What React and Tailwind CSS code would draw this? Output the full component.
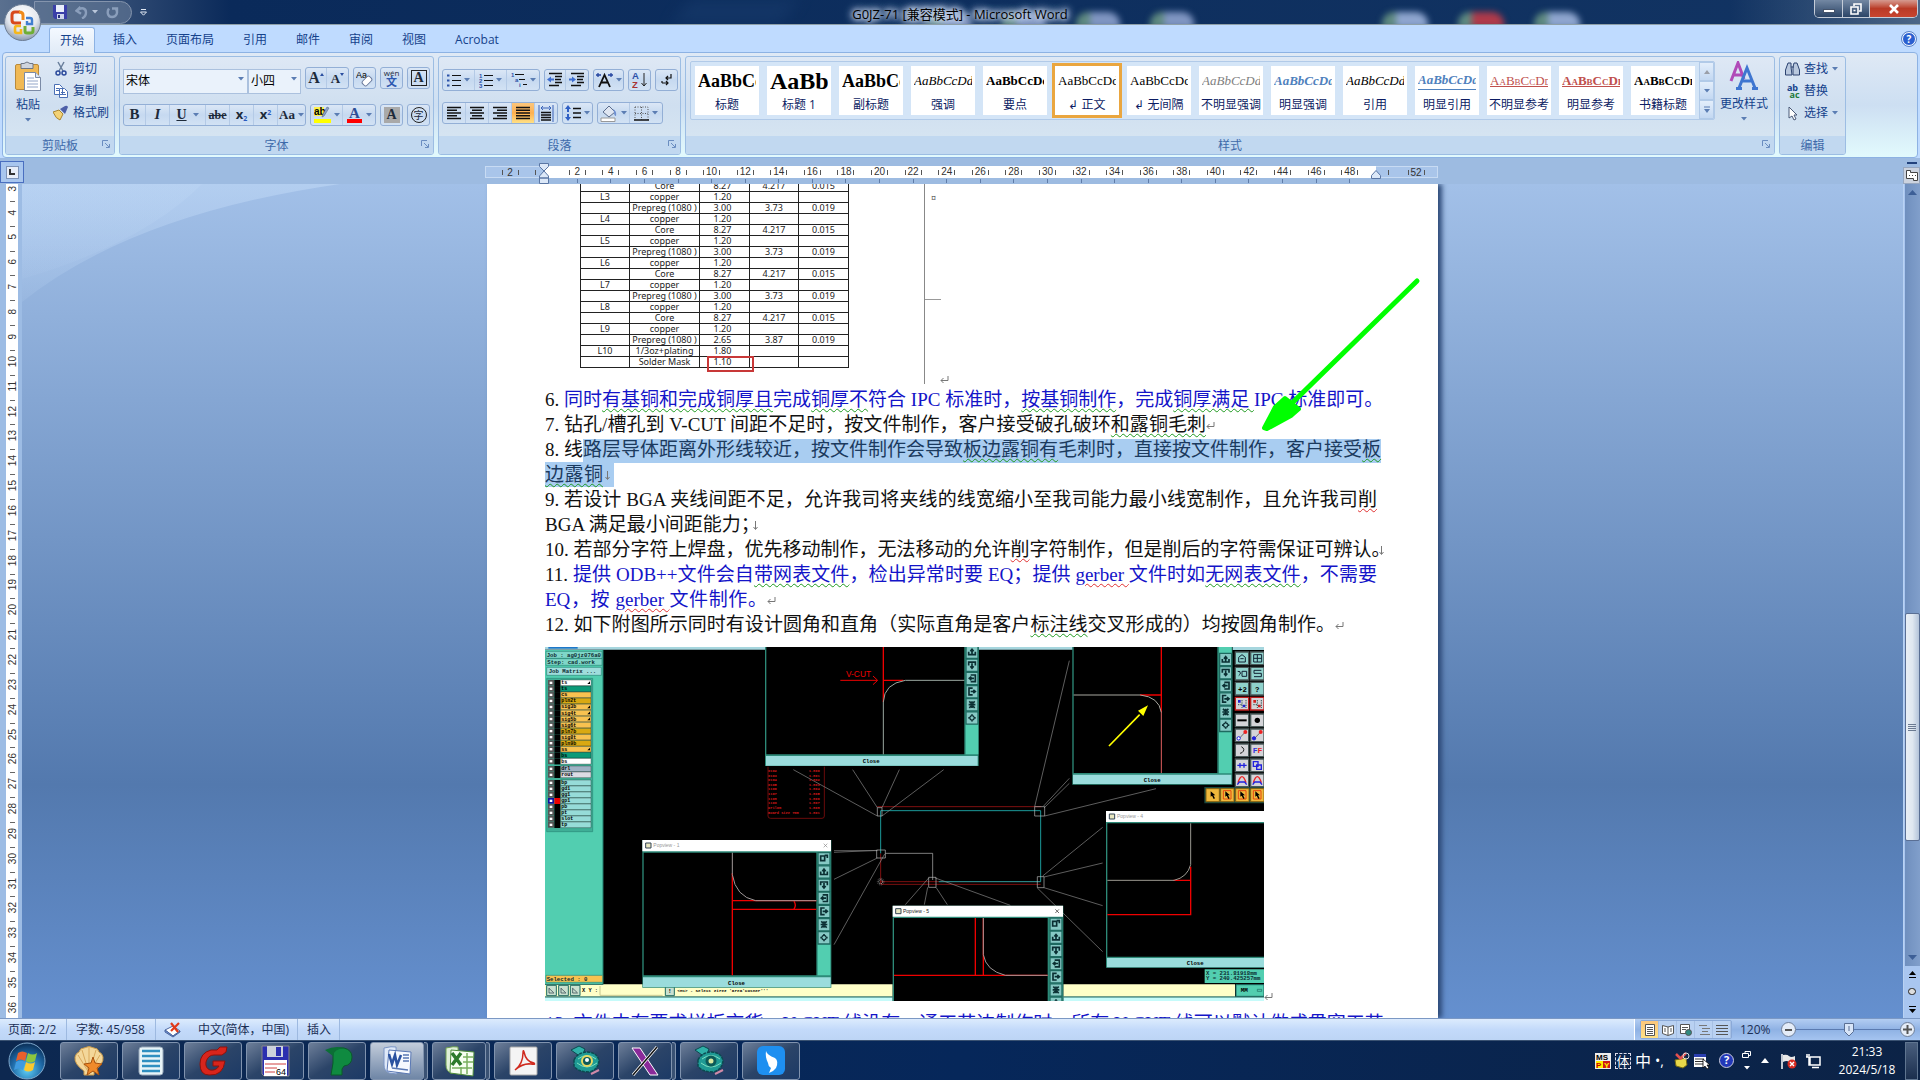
import React from "react";

const UI = "font-['Open_Sans','Noto_Sans_CJK_SC',sans-serif]";

function Caret({ c = "#5b7db3" }) {
  return (
    <svg width="6" height="4" viewBox="0 0 6 4" className="shrink-0">
      <path d="M0 0h6L3 3.6z" fill={c} />
    </svg>
  );
}

function Bars({ rows, c = "#111" }) {
  return (
    <svg width="16" height="16" viewBox="0 0 16 16">
      {rows.map(([a, b], i) => (
        <path key={i} d={`M${a} ${2.5 + i * 2.75}H${b}`} stroke={c} strokeWidth="1.5" />
      ))}
    </svg>
  );
}

function Cluster({ children }) {
  return (
    <div className="flex h-[22px] shrink-0 overflow-hidden rounded-[3px] border border-[#93afd6] bg-linear-to-b from-[#dbe7f6] via-[#c6d9f0] to-[#d2e2f4]">
      {children}
    </div>
  );
}

function Tool({ w, label, children, active, caret, last }) {
  return (
    <button
      aria-label={label}
      title={label}
      className={`${w} flex h-full items-center justify-center gap-[3px] text-[#1d2a3a] ${last ? "" : "border-r border-[#b4cae6]"} ${active ? "bg-linear-to-b from-[#fbc67b] via-[#fdb04f] to-[#ffe084]" : ""}`}
    >
      {children}
      {caret && <Caret />}
    </button>
  );
}

function Launcher() {
  return (
    <button aria-label="对话框启动器" className="absolute top-1 right-1">
      <svg width="8" height="8" viewBox="0 0 8 8" fill="none" stroke="#6a8dc0">
        <path d="M.5 6V.5H6M3 3l4 4M7.5 4v3.5H4" />
      </svg>
    </button>
  );
}

function Group({ title, w, children, launcher = true }) {
  return (
    <section className={`${w} flex h-[99px] flex-col overflow-hidden rounded-[3px] border border-[#9cbde3] bg-linear-to-b from-[#dee8f5] via-[#cfdff0] to-[#d9e7f2]`}>
      <div className="flex h-[79px] min-w-0">{children}</div>
      <div className="relative flex flex-1 items-center justify-center bg-[#c1d8f0] pt-[2px] text-xs text-[#3e6aaa]">
        {title}
        {launcher && <Launcher />}
      </div>
    </section>
  );
}

const STYLES = [
  ["标题", "text-[18px] font-bold"],
  ["标题 1", "text-[24px] font-bold"],
  ["副标题", "text-[18px] font-bold"],
  ["强调", "text-[13px] italic"],
  ["要点", "text-[13px] font-bold"],
  ["↲ 正文", "text-[13px]", true],
  ["↲ 无间隔", "text-[13px]"],
  ["不明显强调", "text-[13px] italic text-[#808080]"],
  ["明显强调", "text-[13px] italic font-bold text-[#4f81bd]"],
  ["引用", "text-[13px] italic"],
  ["明显引用", "text-[13px] italic font-bold text-[#4f81bd] border-b border-[#4f81bd]"],
  ["不明显参考", "text-[13px] text-[#c0504d] underline [font-variant:small-caps]"],
  ["明显参考", "text-[13px] font-bold text-[#c0504d] underline [font-variant:small-caps]"],
  ["书籍标题", "text-[13px] font-bold [font-variant:small-caps]"],
];

function TitleBar() {
  return (
    <header className="relative flex h-[25px] shrink-0 items-center overflow-hidden border-b border-[#8fa0a8] bg-linear-to-r from-[#5a708f] via-[#0a2a5a] via-12% to-[#123463]">
      <div className="absolute inset-y-0 left-[680px] w-[110px] -skew-x-[30deg] bg-[#16396a] opacity-70 blur-sm" />
      <div className="absolute inset-y-0 right-0 w-[190px] bg-linear-to-r from-transparent to-[#4b6687]" />
      <div className="absolute top-3 right-[340px] flex gap-[30px] blur-[3px]">
        {["bg-[#8fa6cf]", "bg-[#b03a4a]", "bg-[#8fa6cf]"].map((c, i) => (
          <div key={i} className={`${c} h-4 w-[46px] rounded-t-xl border-l-[14px] border-[#5f8a80]`} />
        ))}
      </div>
      <div className="absolute top-3 left-[928px] flex gap-[30px] blur-[3px]">
        {[0, 1, 2, 3].map((i) => (
          <div key={i} className="h-4 w-[44px] rounded-t-xl border-l-[14px] border-[#5f8a80] bg-[#8096c2]" />
        ))}
      </div>
      <div className="relative ml-[34px] flex h-[23px] w-[98px] items-center gap-[8px] rounded-r-full border border-[#8494ad] bg-[#5f7593]/70 pl-[18px]">
        <button aria-label="保存">
          <svg width="14" height="14" viewBox="0 0 14 14">
            <path d="M0 0h14v14H2L0 12z" fill="#3a3fa8" />
            <path d="M3 0h8v7H3z" fill="#e9eefb" />
            <path d="M4 9h7v5H4z" fill="#cfd6ee" />
            <path d="M5 10h2v3H5z" fill="#26307c" />
          </svg>
        </button>
        <button aria-label="撤消" className="flex items-center gap-1">
          <svg width="13" height="13" viewBox="0 0 13 13" fill="none" stroke="#8a9ebb" strokeWidth="2.4">
            <path d="M2 4.5c5-4 9-2 9 2 0 3-2 5-4 6M5.500 1L1.500 4.700l4.500 3" />
          </svg>
          <Caret c="#b9c6da" />
        </button>
        <button aria-label="重复">
          <svg width="13" height="13" viewBox="0 0 13 13" fill="none" stroke="#8a9ebb" strokeWidth="2.4">
            <path d="M3 2.500C1 5 1 11 6 11s6-5 4-8M6 2.500h5V7" />
          </svg>
        </button>
      </div>
      <button aria-label="自定义快速访问工具栏" className="relative ml-2 text-white">
        <svg width="7" height="7" viewBox="0 0 7 7"><path d="M1 .5h5" stroke="#dfe7f2" /><path d="M.5 3h6L3.500 6.200z" fill="none" stroke="#dfe7f2" /></svg>
      </button>
      <h1 className="absolute inset-x-0 top-[5px] text-center text-[13px] leading-[18px] text-black [text-shadow:0_0_4px_#cfdcf2,0_0_6px_#cfdcf2,0_0_8px_#cfdcf2,0_0_10px_#b5c6e2,0_0_12px_#b5c6e2]">
        G0JZ-71 [兼容模式] - Microsoft Word
      </h1>
      <div className="absolute top-0 right-[2px] flex h-[18px] w-[104px] overflow-hidden rounded-b-[5px] border border-t-0 border-[#c4ccd8]">
        <button aria-label="最小化" className="flex w-[28px] items-center justify-center border-r border-[#c4ccd8] bg-linear-to-b from-[#7388a3] to-[#2c4567]">
          <span className="mt-1 h-[4px] w-[12px] border border-[#44536a] bg-white" />
        </button>
        <button aria-label="还原" className="flex w-[27px] items-center justify-center border-r border-[#c4ccd8] bg-linear-to-b from-[#7388a3] to-[#2c4567]">
          <svg width="12" height="12" viewBox="0 0 12 12" fill="none" stroke="#fff" strokeWidth="1.600"><path d="M4 3V1h7v7H9M1 4h7v7H1zM3.500 7.500h2" /></svg>
        </button>
        <button aria-label="关闭" className="flex flex-1 items-center justify-center bg-linear-to-b from-[#d59a90] via-[#b93a26] to-[#c8452f]">
          <svg width="12" height="10" viewBox="0 0 12 10"><path d="M2 1l8 8M10 1L2 9" stroke="#fff" strokeWidth="2.600" /></svg>
        </button>
      </div>
    </header>
  );
}

function Orb() {
  return (
    <button aria-label="Office 按钮" className="absolute top-[4px] left-[4px] z-10">
      <svg width="37" height="37" viewBox="0 0 37 37">
        <defs>
          <radialGradient id="orb" cx=".5" cy=".3" r=".7"><stop offset="0" stopColor="#fff" /><stop offset=".6" stopColor="#e3e7ee" /><stop offset="1" stopColor="#8d9bb0" /></radialGradient>
        </defs>
        <circle cx="18.500" cy="18.500" r="18" fill="url(#orb)" stroke="#6b7c94" />
        <g fill="none" strokeWidth="3">
          <path d="M16 8h-5q-3 0-3 3v5q0 3 3 3h6" stroke="#d8491c" />
          <path d="M15 8q4 0 4 3v5" stroke="#ef8a1b" />
          <path d="M22 14h4q2 0 2 2v4h-5v-3" stroke="#3f7ed0" strokeWidth="2.400" />
          <path d="M17 22h-4q-2 0-2 2v3q0 2 2 2h4v-4" stroke="#f5b71c" strokeWidth="2.600" />
          <path d="M21 22v5q0 2 2 2h3q3 0 3-2v-4" stroke="#6fae35" />
        </g>
      </svg>
    </button>
  );
}

function Ribbon() {
  const tabs = ["插入", "页面布局", "引用", "邮件", "审阅", "视图", "Acrobat"];
  return (
    <>
      <nav className="flex h-[27px] shrink-0 items-end bg-[#bfdbff] pr-1 pl-[49px] text-xs text-[#15428b]">
        <button className="relative top-px h-[26px] w-[46px] rounded-t-[3px] border border-b-0 border-[#8db2e3] bg-linear-to-b from-[#f4f9ff] to-[#e1ebf7]">开始</button>
        <div className="flex h-[25px] flex-1 items-center gap-[29px] pl-[18px]">
          {tabs.map((t) => <button key={t}>{t}</button>)}
        </div>
        <button aria-label="帮助" className="mb-[6px] flex size-[14px] items-center justify-center rounded-full border border-white bg-[#2a5fd0] text-[10px] leading-none font-bold text-white outline outline-[#5b83c8]">?</button>
      </nav>
      <div className="mx-[2px] flex h-[106px] shrink-0 gap-1 rounded-[4px] border border-[#8db2e3] bg-linear-to-b from-[#dfe9f5] via-[#cddff2] to-[#e2fafd] py-[3px] pr-[71px] pl-[2px]">
        <Group title="剪贴板" w="w-[110px] shrink-0">
          <button className="flex w-[44px] flex-col items-center pt-1 text-xs text-[#15428b]">
            <svg width="27" height="31" viewBox="0 0 27 31">
              <rect x=".5" y="3.500" width="23" height="25" rx="1.500" fill="#f0b955" stroke="#b98a3c" />
              <path d="M6 2.500h3q3-3 6 0h3v5H6z" fill="#cfd5de" stroke="#6d7787" />
              <path d="M9.500 11.500h11l5 5v13h-16z" fill="#fff" stroke="#7b8ba6" />
              <path d="M12 17h7M12 20h11M12 23h11M12 26h11" stroke="#93a6c8" />
              <path d="M20.500 11.500v5h5" fill="#dfe7f5" stroke="#7b8ba6" />
            </svg>
            <span className="mt-[3px] leading-5">粘贴</span>
            <span className="mt-[3px]"><Caret /></span>
          </button>
          <div className="flex flex-col items-start pt-px pl-[3px] text-xs text-[#15428b]">
            <button className="flex h-[22px] items-center gap-1">
              <svg width="16" height="16" viewBox="0 0 16 16" fill="none" strokeWidth="1.500"><path d="M5 1l5 9M11 1L6 10" stroke="#6a7f9c" /><circle cx="5" cy="12" r="2" stroke="#2b4a9c" /><circle cx="11" cy="12" r="2" stroke="#2b4a9c" /></svg>
              剪切
            </button>
            <button className="flex h-[22px] items-center gap-1">
              <svg width="16" height="16" viewBox="0 0 16 16" fill="#fff" stroke="#4a6fb5"><path d="M1.500 1.500h5l3 3v7h-8zM6.500 5.500h5l3 3v6h-8z" /><path d="M8 9.500h4M8 11.500h5M3 5.500h3M3 7.500h3" /></svg>
              复制
            </button>
            <button className="flex h-[22px] items-center gap-1">
              <svg width="16" height="16" viewBox="0 0 16 16"><path d="M0 7l6-2 4 4-3 6q-4-1-7-8z" fill="#f3d276" stroke="#a98530" /><path d="M7 4l5 5 3-7q-1-2-3-1z" fill="#4d5fa8" /></svg>
              格式刷
            </button>
          </div>
        </Group>

        <Group title="字体" w="w-[315px] shrink-0">
          <div className="flex flex-1 flex-col gap-[10px] pt-[10px] pl-[3px]">
            <div className="flex gap-1">
              <div className="flex">
                {[["w-[125px]", "宋体", "字体"], ["w-[53px]", "小四", "字号"]].map(([w, v, l]) => (
                  <div key={v} className={`${w} relative`}>
                    <select aria-label={l} className="h-[25px] w-full appearance-none border border-[#abc1de] bg-[#eaf2fb] pl-[2px] text-xs text-black" defaultValue={v}>
                      <option>{v}</option>
                    </select>
                    <span className="pointer-events-none absolute top-[10px] right-[4px] flex"><Caret /></span>
                  </div>
                ))}
              </div>
              <Cluster>
                <Tool w="w-[21px]" label="增大字体"><b className="font-['Liberation_Serif',serif] text-base leading-none">A</b><svg width="4" height="10" className="-ml-[3px]" viewBox="0 0 4 10"><path d="M0 3l2-3 2 3z" fill="#2a4ea0" /></svg></Tool>
                <Tool w="w-[21px]" label="缩小字体" last><b className="font-['Liberation_Serif',serif] text-[13px] leading-none">A</b><svg width="4" height="10" className="-ml-[3px]" viewBox="0 0 4 10"><path d="M0 0l2 3 2-3z" fill="#2a4ea0" /></svg></Tool>
              </Cluster>
              <Cluster>
                <Tool w="w-[21px]" label="清除格式" last><svg width="17" height="17" viewBox="0 0 17 17"><text x="0" y="8" fontSize="9" fontFamily="Liberation Sans">Aa</text><rect x="6" y="8" width="10" height="6" rx="2" transform="rotate(-45 11 11)" fill="#fff" stroke="#68789a" /></svg></Tool>
              </Cluster>
              <Cluster>
                <Tool w="w-[21px]" label="拼音指南" last><span className="flex flex-col items-center text-[8px] leading-[8px]">wén<span className="text-[11px] leading-[10px] font-bold text-[#2e58b0]">文</span></span></Tool>
              </Cluster>
              <Cluster>
                <Tool w="w-[21px]" label="字符边框" last><b className="flex size-4 items-center justify-center border border-[#222] font-['Liberation_Serif',serif] text-sm leading-none">A</b></Tool>
              </Cluster>
            </div>
            <div className="flex gap-1">
              <Cluster>
                <Tool w="w-[22px]" label="加粗"><b className="font-['Liberation_Serif',serif] text-[15px]">B</b></Tool>
                <Tool w="w-[24px]" label="倾斜"><b className="font-['Liberation_Serif',serif] text-[15px] italic">I</b></Tool>
                <Tool w="w-[36px]" label="下划线" caret><b className="mr-[3px] font-['Liberation_Serif',serif] text-[14px] underline">U</b></Tool>
                <Tool w="w-[24px]" label="删除线"><b className="font-['Liberation_Serif',serif] text-xs line-through">abe</b></Tool>
                <Tool w="w-[24px]" label="下标"><b className="text-[13px]">x<sub className="text-[7px] text-[#2a5bc0]">2</sub></b></Tool>
                <Tool w="w-[24px]" label="上标"><b className="text-[13px]">x<sup className="text-[7px] text-[#2a5bc0]">2</sup></b></Tool>
                <Tool w="w-[27px]" label="更改大小写" caret last><b className="font-['Liberation_Serif',serif] text-[13px]">Aa</b></Tool>
              </Cluster>
              <Cluster>
                <Tool w="w-[32px]" label="突出显示" caret><svg width="17" height="18" viewBox="0 0 17 18"><path d="M0 1h10v9H0z" fill="#fdf04a" /><text x="0" y="9" fontSize="10" fontWeight="bold" fontFamily="Liberation Sans">ab</text><path d="M15 2l-5 8-2 1 1-3 4-7z" fill="#8aa0c8" stroke="#5a6b8a" strokeWidth=".6" /><path d="M0 13h17v4H0z" fill="#ff0" /></svg></Tool>
                <Tool w="w-[32px]" label="字体颜色" caret last><svg width="17" height="18" viewBox="0 0 17 18"><text x="3" y="12" fontSize="15" fontWeight="bold" fill="#2e4f96" fontFamily="Liberation Serif">A</text><path d="M1 13h15v4H1z" fill="red" /></svg></Tool>
              </Cluster>
              <Cluster>
                <Tool w="w-[21px]" label="字符底纹" last><b className="flex size-4 items-center justify-center bg-[#a9a9a9] font-['Liberation_Serif',serif] text-sm leading-none">A</b></Tool>
              </Cluster>
              <Cluster>
                <Tool w="w-[21px]" label="带圈字符" last><span className="flex size-4 items-center justify-center rounded-full border border-[#222] text-[10px] leading-none">字</span></Tool>
              </Cluster>
            </div>
          </div>
        </Group>

        <Group title="段落" w="w-[243px] shrink-0">
          <div className="flex flex-1 flex-col gap-[11px] pt-[12px] pl-[3px]">
            <div className="flex gap-1">
              <Cluster>
                <Tool w="w-[32px]" label="项目符号" caret><svg width="14" height="14" viewBox="0 0 14 14"><path d="M5 2.500h9M5 7.500h9M5 12.500h9" stroke="#111" /><path d="M0 2.500h2.500M0 7.500h2.500M0 12.500h2.500" stroke="#2b52a8" strokeWidth="2" /></svg></Tool>
                <Tool w="w-[32px]" label="编号" caret><svg width="14" height="15" viewBox="0 0 14 15"><path d="M5 2.500h9M5 7.500h9M5 12.500h9" stroke="#111" /><g fontSize="6" fill="#2b52a8" fontFamily="Liberation Sans" fontWeight="bold"><text y="4.500">1</text><text y="9.500">2</text><text y="14.500">3</text></g></svg></Tool>
                <Tool w="w-[32px]" label="多级列表" caret last><svg width="16" height="16" viewBox="0 0 16 16"><path d="M4 2.500h9M8 7.500h6M12 12.500h4" stroke="#111" /><g fontSize="6" fill="#2b52a8" fontFamily="Liberation Sans" fontWeight="bold"><text y="4.500">1</text><text x="4" y="9.500">a</text><text x="8" y="15">i</text></g></svg></Tool>
              </Cluster>
              <Cluster>
                <Tool w="w-[21px]" label="减少缩进量"><svg width="16" height="16" viewBox="0 0 16 16"><path d="M2 1.500h13M8 4.500h7M8 7.500h6M8 10.500h7M2 13.500h10" stroke="#111" strokeWidth="1.500" /><path d="M0 7.500l4-3v2h3v2H4v2z" fill="#3f6ed0" /></svg></Tool>
                <Tool w="w-[22px]" label="增加缩进量" last><svg width="16" height="16" viewBox="0 0 16 16"><path d="M2 1.500h13M8 4.500h7M8 7.500h6M8 10.500h7M2 13.500h10" stroke="#111" strokeWidth="1.500" /><path d="M7 7.500l-4-3v2H0v2h3v2z" fill="#3f6ed0" /></svg></Tool>
              </Cluster>
              <Cluster>
                <Tool w="w-[29px]" label="中文版式" caret last><svg width="17" height="16" viewBox="0 0 17 16" fill="none"><path d="M3 15L8.500 3 14 15M5 10.500h7" stroke="#111" strokeWidth="1.800" /><path d="M0 3h5M12 3h5M2 1v4M15 1v4" stroke="#2343a0" strokeWidth="1.300" /></svg></Tool>
              </Cluster>
              <Cluster>
                <Tool w="w-[21px]" label="排序" last><svg width="16" height="18" viewBox="0 0 16 18"><g fontSize="9.500" fontWeight="bold" fontFamily="Liberation Sans"><text y="8" fill="#2b4fa8">A</text><text y="17" fill="#a83232">Z</text></g><path d="M12 2v13M9.500 12l2.500 3 2.500-3" stroke="#222" fill="none" /></svg></Tool>
              </Cluster>
              <Cluster>
                <Tool w="w-[21px]" label="显示编辑标记" last><svg width="12" height="15" viewBox="0 0 12 15" fill="none" stroke="#111" strokeWidth="1.200"><path d="M10 1v4H5M7 3L5 5l2 2M1 10h6M5 8l2 2-2 2M1 8v2" /></svg></Tool>
              </Cluster>
            </div>
            <div className="flex gap-1">
              <Cluster>
                <Tool w="w-[23px]" label="左对齐"><Bars rows={[[1, 15], [1, 11], [1, 15], [1, 11], [1, 15]]} /></Tool>
                <Tool w="w-[23px]" label="居中"><Bars rows={[[1, 15], [3, 13], [1, 15], [3, 13], [1, 15]]} /></Tool>
                <Tool w="w-[23px]" label="右对齐"><Bars rows={[[1, 15], [5, 15], [1, 15], [5, 15], [1, 15]]} /></Tool>
                <Tool w="w-[23px]" label="两端对齐" active><Bars rows={[[1, 15], [1, 15], [1, 15], [1, 15], [1, 15]]} /></Tool>
                <Tool w="w-[22px]" label="分散对齐" last><svg width="16" height="17" viewBox="0 0 16 17"><path d="M1 0v17M15 0v17M3 3h10M5 1L3 3l2 2M11 1l2 2-2 2" stroke="#3a63b8" fill="none" /><path d="M3 7.500h10M3 10h10M3 12.500h10M3 15h10" stroke="#111" strokeWidth="1.400" /></svg></Tool>
              </Cluster>
              <Cluster>
                <Tool w="w-[29px]" label="行距" caret last><svg width="16" height="16" viewBox="0 0 16 16"><path d="M3 0l3 4H4v3H2V4H0zM3 16l3-4H4V9H2v3H0z" fill="#2f5fc4" /><path d="M8 3.500h8M8 8h8M8 12.500h8" stroke="#111" strokeWidth="1.400" /></svg></Tool>
              </Cluster>
              <Cluster>
                <Tool w="w-[32px]" label="底纹" caret><svg width="18" height="17" viewBox="0 0 18 17"><path d="M3 7l6-6 6 6-6 5z" fill="#dfe6f2" stroke="#5a6c8c" /><path d="M13 4q4 2 3 7-2 0-2-4z" fill="#6e8fd0" /><path d="M1 13h14v3.500H1z" fill="#fff" stroke="#999" /></svg></Tool>
                <Tool w="w-[32px]" label="框线" caret last><svg width="15" height="15" viewBox="0 0 15 15"><path d="M1 1h13v13M1 1v13M7.500 1v13M1 7.500h13" stroke="#555" strokeDasharray="1 1.500" fill="none" /><path d="M0 14h15" stroke="#111" strokeWidth="1.500" /></svg></Tool>
              </Cluster>
            </div>
          </div>
        </Group>

        <Group title="样式" w="min-w-0 flex-1">
          <div className="mt-1 ml-1 flex h-[59px] min-w-0 overflow-hidden rounded-[2px] border border-[#b1cae8] bg-[#d4e5f7]">
            <div className="flex gap-2 py-1 pr-1 pl-1">
              {STYLES.map(([n, c, sel]) => (
                <button key={n} className={`flex h-[49px] w-[64px] shrink-0 flex-col items-center bg-white ${sel ? "outline-[3px] outline-[#eaa63f]" : ""}`}>
                  <span className="flex h-[30px] w-[58px] items-center overflow-hidden">
                    <span className={`${c} w-[58px] shrink-0 overflow-hidden font-['Liberation_Serif',serif] leading-[26px] whitespace-nowrap`}>
                      {c.includes("border-b") ? <span className="block leading-[18px]">AaBbCcDd</span> : "AaBbCcDd"}
                    </span>
                  </span>
                  <span className="text-xs leading-[20px] whitespace-nowrap text-[#0c1c63]">{n}</span>
                </button>
              ))}
            </div>
            <div className="flex w-[15px] shrink-0 flex-col">
              {["up", "down", "more"].map((k) => (
                <button key={k} aria-label={k} className="flex flex-1 items-center justify-center border border-[#b1cae8] bg-linear-to-b from-[#e3eefb] to-[#c3d8f2]">
                  {k === "up" ? <svg width="6" height="4"><path d="M0 4h6L3 0z" fill="#9a9fa8" /></svg> : k === "down" ? <Caret /> : <svg width="6" height="8"><path d="M0 1h6" stroke="#5b7db3" /><path d="M0 3h6L3 7z" fill="#5b7db3" /></svg>}
                </button>
              ))}
            </div>
          </div>
          <button className="ml-1 flex w-[50px] flex-col items-center pt-1 text-xs text-[#15428b]">
            <svg width="30" height="30" viewBox="0 0 30 30" fill="none" strokeWidth="3">
              <path d="M2 20L9 2l6 16M4 14h9" stroke="#b04ab8" />
              <path d="M10 27l8-20 8 20M13 20h10M7 27.500h6M23 27.500h6" stroke="#3f76d0" />
            </svg>
            <span className="mt-[3px] leading-5 whitespace-nowrap">更改样式</span>
            <span className="mt-[3px]"><Caret /></span>
          </button>
        </Group>

        <Group title="编辑" w="w-[67px] shrink-0" launcher={false}>
          <div className="flex flex-col items-start pt-px pl-[5px] text-xs text-[#15428b]">
            <button className="flex h-[22px] items-center gap-1">
              <svg width="15" height="14" viewBox="0 0 15 14" fill="#b9c8de" stroke="#2c4370"><path d="M3 1h3v4l1 8H.5V8zM9 1h3l2.500 7v5H8V5zM6 5h3" /></svg>
              查找 <Caret />
            </button>
            <button className="flex h-[22px] items-center gap-1">
              <span className="flex w-[15px] flex-col text-[9px] leading-[7px] font-bold"><span>ab</span><span className="pl-1 text-[#1e7a3c]">ac</span></span>
              替换
            </button>
            <button className="flex h-[22px] items-center gap-1">
              <svg width="15" height="15" viewBox="0 0 15 15"><path d="M4 1v11l3-2 2 4 2-1-2-4h3z" fill="#fff" stroke="#4a5a78" /></svg>
              选择 <Caret />
            </button>
          </div>
        </Group>
      </div>
    </>
  );
}

function Mark({ n }) {
  return (
    <span className="flex w-[17px] items-center justify-between">
      <i className="h-[5px] w-px bg-[#555]" />{n}<i className="h-[5px] w-px bg-[#555]" />
    </span>
  );
}

function HRuler() {
  const ns = Array.from({ length: 24 }, (_, i) => 2 * (i + 1));
  return (
    <div className="flex h-[26px] shrink-0 bg-[#9dbbe1] font-['Liberation_Sans',sans-serif] text-[10px] text-[#333]">
      <button aria-label="制表符" className="mt-[3px] flex h-[22px] w-[24px] items-center justify-center border border-[#4a6fc0] bg-[#a8c6ee]">
        <span className="flex size-[13px] items-center justify-center border border-[#7d93b8] bg-[#e8eef8]"><span className="size-[6px] border-b-2 border-l-2 border-[#333]" /></span>
      </button>
      <div className="flex flex-1 justify-center pt-[8px] pr-[5px]">
        <div className="flex h-[12px] w-[59px] items-center border border-r-0 border-[#c8dbf3] bg-[#a9c5ea]">
          <span className="ml-[16px]"><Mark n={2} /></span><i className="ml-[16px] h-[5px] w-px bg-[#555]" />
        </div>
        <div className="relative w-[832px]">
          <div className="flex h-[12px] items-center bg-white pr-[9px] pl-[17px]">
            <div className="grid flex-1 grid-cols-24">{ns.map((n) => <span key={n} className="flex justify-center leading-[12px]"><Mark n={n} /></span>)}</div>
          </div>
          <div className="mt-px flex h-[4px] pr-[9px] pl-[17px]">
            <div className="grid flex-1 grid-cols-24">{ns.map((n) => <span key={n} className="mx-auto h-[4px] w-px bg-[#5f7ca8]" />)}</div>
          </div>
          <svg className="absolute -top-[3px] -left-[5px]" width="10" height="21" viewBox="0 0 10 21" fill="#dce8f8" stroke="#5a76a4"><path d="M.5.5h9v3L5 8 .5 3.500zM5 8l4.500 5v2h-9v-2zM.5 15h9v5.500h-9z" /></svg>
          <svg className="absolute top-[4px] -right-[5px]" width="10" height="9" viewBox="0 0 10 9" fill="#dce8f8" stroke="#5a76a4"><path d="M5 .5l4.500 5v3h-9v-3z" /></svg>
        </div>
        <div className="flex h-[12px] w-[62px] items-center border border-l-0 border-[#c8dbf3] bg-[#a9c5ea]">
          <i className="ml-[12px] h-[5px] w-px bg-[#555]" /><span className="ml-[19px]"><Mark n={52} /></span>
        </div>
      </div>
      <div className="flex w-[17px] flex-col items-center justify-end gap-[3px]">
        <span className="h-[2px] w-[10px] bg-[#22427c]" />
        <button aria-label="标尺" className="flex h-[17px] w-full items-center justify-center border border-[#98a8c0] bg-[#ccd3df]">
          <svg width="12" height="11" viewBox="0 0 12 11" fill="#fff" stroke="#444"><path d="M.5.500h4v2h7v8h-4v-2h-7z" /><path d="M3 5.500h1M6 5.500h1M9 5.500h1" /></svg>
        </button>
      </div>
    </div>
  );
}

const CORE = ["Core", "8.27", "4.217", "0.015"];
const PP = ["Prepreg (1080 )", "3.00", "3.73", "0.019"];
const ROWS = [
  ["", ...CORE], ["L3", "copper", "1.20", "", ""], ["", ...PP], ["L4", "copper", "1.20", "", ""],
  ["", ...CORE], ["L5", "copper", "1.20", "", ""], ["", ...PP], ["L6", "copper", "1.20", "", ""],
  ["", ...CORE], ["L7", "copper", "1.20", "", ""], ["", ...PP], ["L8", "copper", "1.20", "", ""],
  ["", ...CORE], ["L9", "copper", "1.20", "", ""], ["", "Prepreg (1080 )", "2.65", "3.87", "0.019"],
  ["L10", "1/3oz+plating", "1.80", "", ""], ["", "Solder Mask", "1.10", "", ""],
];

function G({ children }) {
  return <span className="underline decoration-[#1e9a1e] decoration-wavy decoration-1 underline-offset-2">{children}</span>;
}
function R({ children }) {
  return <span className="underline decoration-[#e03030] decoration-wavy decoration-1 underline-offset-2">{children}</span>;
}
function B({ children }) {
  return <span className="text-[#1414c8]">{children}</span>;
}
function Ret({ down }) {
  return (
    <svg width="9" height="9" viewBox="0 0 9 9" className="mt-[9px] shrink-0" fill="none" stroke="#777">
      {down ? <path d="M4.500 0v8M2.500 6l2 2.500 2-2.500" /> : <path d="M8 1v4.500H1M3.500 3L1 5.500 3.500 8" />}
    </svg>
  );
}
function Line({ w = "w-full", mark, cls = "", children }) {
  return (
    <p className="flex h-[25px] items-start whitespace-nowrap">
      <span className={`${w} ${cls} block h-[25px] shrink-0 [text-align-last:justify]`}>{children}</span>
      {mark && <Ret down={mark === "down"} />}
    </p>
  );
}

function PopTools({ x, y, n, first = 0 }) {
  const g = [
    "M8 10h12v14H8zM20 8h8v8",
    "M8 17v9h20v-9M18 26V12M13 16l5-6 5 6",
    "M8 19V9h20v10M18 12v12M13 21l5 6 5-6",
    "M14 8h14v20H14M24 18H12M16 13l-6 5 6 5",
    "M20 8H9v20h11M14 18h12M22 13l6 5-6 5",
    "M18 8v20M8 18h20M10 8l5 6M26 8l-5 6M10 28l5-6M26 28l-5-6",
    "M18 7v6M18 23v6M7 18h6M23 18h6M12 12l3 3M24 12l-3 3M12 24l3-3M24 24l-3-3",
  ];
  return Array.from({ length: n }, (_, i) => (
    <g key={i} transform={`translate(${x} ${y + i * 39.500})`}>
      <path d="M0 0h36v37H0z" fill="#86c9c4" stroke="#1e6a60" strokeWidth="4" />
      <path d={g[i + first]} fill="none" stroke="#0b2f33" strokeWidth="5" />
    </g>
  ));
}

const LAYERS = [
  ["ts", "#fff", 1], ["ts", "#0b9a78"], ["cs", "#f8c250"], ["pln2t", "#d9a912"], ["sig3b", "#f8c250", 1], ["sig4t", "#f8c250", 1], ["sig5b", "#f8c250", 1],
  ["sig6t", "#f8c250"], ["pln7b", "#d9a912"], ["sig8t", "#f8c250"], ["pln9b", "#d9a912"], ["ss", "#f8c250", 1], ["bs", "#0b9a78"], ["bs", "#fff"],
];
const LAYERS2 = [["drl", "#9fb2c4"], ["rout", "#dcdce4"]];
const LAYERS3 = ["bp", "gd1", "gg1", "gp1", "pb", "pt", "slot", "tp"];

function Layer({ y, n, c, a, sel }) {
  return (
    <g>
      <path d={`M24 ${y}h18v17H24z`} fill={sel ? "#1010a0" : "#555"} />
      <path d={`M29 ${y + 5}h8v7h-8z`} fill="#fff" />
      <path d={`M43 ${y}h18v18H43z`} fill={sel ? "#e00" : "#000"} />
      <path d={`M62 ${y}h91v17H62z`} fill={c} stroke="#222" />
      <text x="64" y={y + 13} fontSize="15">{n}</text>
      {a && <path d={`M142 ${y + 12}h8v-8z`} />}
    </g>
  );
}

function CadPicture() {
  const rays = "M760 389L1012 528M938 389l74 114M1078 389l-52 114M1211 389L1026 528M882 632h130M882 637l130-6M882 718l130-64M882 914l152-272M1096 794l70-80M1153 794l10-52M1222 794l-34-52M1186 714l225 82M1588 62L1484 500M1588 415l-78 84M1588 430l-76 74M1848 446l-334 82M1688 562l-180 146M1688 669l-176 42M1688 797l-176-54M1688 935L1492 744";
  return (
    <svg viewBox="15 21 2157 1062" width="719" height="354" role="img" aria-label="CAD 视图" className="block shrink-0" fontFamily="Liberation Mono, monospace" fontWeight="bold">
      <path d="M15 21h2157v1062H15z" />
      <path d="M15 21h660v8H15zM1316 21h282v8h-282zM2078 21h94v9h-94z" fill="#a6d6de" />
      <path d="M25 21h88v5H25z" fill="#1e78c8" />
      <path d="M15 30h174v1003H15z" fill="#52ceb0" />
      <path d="M189 30v1003" stroke="#1e7a6a" strokeWidth="3" />
      <g stroke="#2a8a78" strokeWidth="2">
        <path d="M18 34h168v21H18zM18 56h168v20H18z" fill="#7fd6c8" />
        <path d="M20 82h164v24H20z" fill="#9fdddc" />
        <path d="M20 115h138v460H20z" fill="#3fae96" />
        <path d="M18 1006h170v21H18z" fill="#f8c250" />
      </g>
      <g fontSize="17" fill="#0c2a30">
        <text x="20" y="50">Job : ag0jz076a0</text>
        <text x="22" y="72">Step: cad.work</text>
        <text x="26" y="100">Job Matrix ...</text>
        <text x="20" y="1023">Selected : 0</text>
      </g>
      {LAYERS.map(([n, c, a], i) => <Layer key={i} y={120 + i * 18.100} n={n} c={c} a={a} />)}
      {LAYERS2.map(([n, c], i) => <Layer key={n} y={378 + i * 18} n={n} c={c} />)}
      {LAYERS3.map((n, i) => <Layer key={n} y={420 + i * 18} n={n} c="#96dcd8" sel={n === "gp1"} />)}

      <path d="M15 1033h1043v37H15zM1570 1033h515v37h-515z" fill="#ffffc8" />
      <path d="M15 1070h1043v13H15zM1570 1070h602v13h-602z" fill="#c6fbfa" />
      <path d="M15 1071h1043M1570 1071h602M15 1033h175" stroke="#1e6a60" strokeWidth="3" />
      {[20, 56, 91].map((x) => <g key={x}><path d={`M${x} 1036h29v31H${x}z`} fill="#c9e0cf" stroke="#1e6a60" strokeWidth="3" /><path d={`M${x + 7} 1044v15h15M${x + 7} 1045l14 13`} fill="none" stroke="#234" strokeWidth="2" /></g>)}
      <text x="126" y="1056" fontSize="16">X Y :</text>
      <path d="M180 1038v28h188" fill="none" stroke="#c8c890" strokeWidth="3" />
      <path d="M376 1036h27v31h-27z" fill="#c9e0cf" stroke="#1e6a60" strokeWidth="3" />
      <text x="384" y="1058" fontSize="18">!</text>
      <text x="412" y="1056" fontSize="13">&lt;M1&gt; - Select zirez 'area'cosner'''</text>

      <g fill="none" strokeWidth="2">
        <path d="M684 380v148q0 7 8 7h154q7 0 7-7V380" stroke="#a01010" />
        <path d="M1012 500h492M1022 725h480M1022 733h480M1022 640v92" stroke="#c01818" />
        <path d="M1022 512h480v213h-306M1022 512v128" stroke="#1c9a9a" strokeWidth="3" />
        <path d={rays} stroke="#8c8c8c" />
        <path d="M1012 503h14v25h-14zM1010 630h26v24h-26zM1166 712h22v30h-22zM1484 500h30v28h-30zM1492 710h20v33h-20zM1036 640h142v80" stroke="#bbb" />
        <circle cx="1022" cy="725" r="6" stroke="#fff" strokeDasharray="3 2" />
        <circle cx="1022" cy="725" r="10" stroke="#888" strokeDasharray="3 3" />
      </g>
      <g fontSize="11" fill="#d01818">
        {["0102", "0103", "0104", "0105", "1106", "1107", "1108", "1109", "Dril0m"].map((t, i) => <g key={t}><text x="684" y={396 + i * 13.800}>{t}</text><text x="806" y={396 + i * 13.800}>1.80{i}</text></g>)}
        <text x="684" y="521">Board Size 7mm</text><text x="806" y="521">1.801</text>
      </g>

      <path d="M675 21h641v357H675z" fill="#2d8a78" />
      <path d="M679 21h594v322H679z" />
      <path d="M1277 21h38v322h-38z" fill="#52ceb0" />
      <path d="M678 348h635v29H678z" fill="#9adcdc" />
      <text x="968" y="369" fontSize="17">Close</text>
      <PopTools x={1278} y={18} n={6} first={1} />
      <g fill="none" strokeWidth="3">
        <path d="M1030 21v165M1030 121h60" stroke="#e00" strokeWidth="4" />
        <path d="M1030 343V186q2-55 66-65h177" stroke="#9aa8a0" />
        <path d="M901 121h110M999 108l14 13-14 13" stroke="#e00" />
      </g>
      <text x="918" y="112" fontSize="25" fill="#e00" fontFamily="Liberation Sans" fontWeight="normal">V-CUT</text>

      <path d="M1993 441h180v49h-180z" fill="#1a4a40" />
      {[36, 82, 127, 172, 222, 267, 312, 357, 402].map((y, r) => [2086, 2132].map((x, k) => (
        <g key={x + "-" + y}>
          <path d={`M${x} ${y}h40v38h-40z`} fill={r < 3 ? "#8fd2cc" : "#d4d4d8"} stroke={r === 3 ? "#c02020" : "#4a5a5a"} strokeWidth="4" />
          {r === 0 && <path d={k ? `M${x + 9} ${y + 8}h24v22h-24zM${x + 20} ${y + 8}v22M${x + 9} ${y + 19}h24` : `M${x + 10} ${y + 30}V${y + 16}l10-8 10 8v14zM${x + 15} ${y + 20}h10`} fill="none" stroke="#123" strokeWidth="3" />}
          {r === 1 && <path d={k ? `M${x + 32} ${y + 9}H${x + 10}v9h22v10H${x + 10}` : `M${x + 7} ${y + 12}q10-2 8 8l-5 5M${x + 20} ${y + 12}h14v15h-14z`} fill="none" stroke="#123" strokeWidth="3" />}
          {r === 2 && <text x={x + (k ? 13 : 8)} y={y + 28} fontSize="22">{k ? "?" : "+2"}</text>}
          {r === 3 && <g><path d={`M${x + 8} ${y + 8}h8v8h-8zM${x + 22} ${y + 22}h8v8h-8z`} fill={k ? "#c22" : "#22c"} /><path d={`M${x + 20} ${y + 8}v24M${x + 32} ${y + 8}v24M${x + 8} ${y + 22}h12`} stroke="#355" strokeWidth="3" strokeDasharray="4 3" /></g>}
          {r === 4 && (k ? <circle cx={x + 20} cy={y + 19} r="8" /> : <path d={`M${x + 6} ${y + 19}h28`} stroke="#000" strokeWidth="6" />)}
          {r === 5 && <g><path d={`M${x + 12} ${y + 28}l16-17`} stroke="#333" strokeWidth="2" /><circle cx={x + 30} cy={y + 9} r="6" fill="#e22" /><circle cx={x + 10} cy={y + 28} r="5" fill={k ? "#22d" : "#fff"} stroke="#22d" strokeWidth="3" /></g>}
          {r === 6 && (k ? <text x={x + 6} y={y + 28} fontSize="24" fill="#33d">F<tspan fill="#e22">F</tspan></text> : <path d={`M${x + 18} ${y + 8}q14 8 2 18l-6 2`} fill="none" stroke="#222" strokeWidth="3" />)}
          {r === 7 && <path d={k ? `M${x + 8} ${y + 8}h14v14h-14zM${x + 18} ${y + 18}h14v13h-14z` : `M${x + 6} ${y + 19}h28M${x + 14} ${y + 12}v14M${x + 26} ${y + 12}v14`} fill="none" stroke="#22d" strokeWidth="4" />}
          {r === 8 && <g fill="none" strokeWidth="4"><path d={`M${x + 8} ${y + 26}q12-36 24 0`} stroke="#e22" /><path d={`M${x + 6} ${y + 32}l6-8h16l6 8`} stroke="#22d" /></g>}
        </g>
      )))}
      {[1998, 2042, 2087, 2132].map((x, i) => (
        <g key={x}><path d={`M${x} 446h40v39h-40z`} fill="#efb93c" stroke="#8a6410" strokeWidth="3" />{i > 0 && <path d={`M${x + 8} 452h23v25h-23z`} fill="none" stroke="#e64a10" strokeWidth="3" />}<path d={`M${x + 14} 454v16l4-3 5 10 4-2-5-9h6z`} /></g>
      ))}

      <path d="M1597 21h480v413h-480z" fill="#2d8a78" />
      <path d="M1601 21h431v378h-431z" />
      <path d="M2037 21h38v379h-38z" fill="#52ceb0" />
      <path d="M1599 404h475v28h-475z" fill="#9adcdc" />
      <text x="1811" y="425" fontSize="17">Close</text>
      <PopTools x={2039} y={40} n={6} first={1} />
      <g fill="none" strokeWidth="3">
        <path d="M1864 21v195M1800 165h64" stroke="#e00" strokeWidth="4" />
        <path d="M1864 216v183" stroke="#e06060" />
        <path d="M1601 165h200q56 6 63 52" stroke="#a8a8a0" />
        <path d="M1707 318l92-94" stroke="#ff0" strokeWidth="5" />
      </g>
      <path d="M1824 196l-30 16 16 16z" fill="#ff0" />

      <path d="M307 600h567v443H307z" fill="#2d8a78" />
      <path d="M307 600h566v34H307z" fill="#fff" />
      <path d="M311 638h518v368H311z" />
      <path d="M833 638h38v368h-38z" fill="#52ceb0" />
      <path d="M309 1012h563v29H309z" fill="#9adcdc" />
      <path d="M317 609h16v15h-16z" fill="#e8e6c0" stroke="#345" strokeWidth="3" />
      <text x="340" y="622" fontSize="15" fill="#999" fontFamily="Liberation Sans" fontWeight="normal">Popview - 1</text>
      <path d="M851 611l11 11M862 611l-11 11" stroke="#888" strokeWidth="2" />
      <text x="564" y="1034" fontSize="17">Close</text>
      <PopTools x={834} y={638} n={7} />
      <g fill="none" strokeWidth="4">
        <path d="M577 700v306M577 782h252M577 808h252M762 784q8 12 0 23" stroke="#e00" />
        <path d="M577 638v66q10 66 70 78h182" stroke="#a09898" strokeWidth="3" />
      </g>

      <path d="M1698 513h474v470h-474z" fill="#2d8a78" />
      <path d="M1698 513h474v33h-474z" fill="#fff" />
      <path d="M1702 550h470v400h-470z" />
      <path d="M1701 954h471v28h-471z" fill="#9adcdc" />
      <path d="M1708 522h16v15h-16z" fill="#e8e6c0" stroke="#345" strokeWidth="3" />
      <text x="1731" y="535" fontSize="15" fill="#999" fontFamily="Liberation Sans" fontWeight="normal">Popview - 4</text>
      <text x="1940" y="975" fontSize="17">Close</text>
      <g fill="none" strokeWidth="3">
        <path d="M1702 824h250V680M1900 721h52" stroke="#e00" strokeWidth="4" />
        <path d="M1952 550v124q-10 38-50 47h-200" stroke="#9a9890" />
      </g>
      <path d="M1994 988h178v41h-178z" fill="#52ceb0" />
      <g fontSize="17" fill="#0c2a30"><text x="1998" y="1004">X = 231.81918mm</text><text x="1998" y="1021">Y = 240.425257mm</text></g>
      <path d="M2088 1034h84v35h-84z" fill="#52ceb0" stroke="#1e6a60" strokeWidth="3" />
      <text x="2102" y="1057" fontSize="18">MM</text>
      <path d="M2152 1048h13v6h-13z" fill="none" stroke="#1e6a60" strokeWidth="2" />

      <path d="M1058 797h512v286h-512z" fill="#2d8a78" />
      <path d="M1058 797h511v33h-511z" fill="#fff" />
      <path d="M1062 834h461v249h-461z" />
      <path d="M1529 834h38v249h-38z" fill="#52ceb0" />
      <path d="M1067 806h16v15h-16z" fill="#e8e6c0" stroke="#345" strokeWidth="3" />
      <text x="1089" y="819" fontSize="15" fill="#222" fontFamily="Liberation Sans" fontWeight="normal">Popview - 5</text>
      <path d="M1546 808l11 11M1557 808l-11 11" stroke="#222" strokeWidth="2" />
      <PopTools x={1530} y={834} n={7} />
      <g fill="none" strokeWidth="4">
        <path d="M1306 834v172M1330 834v172M1062 1006h461" stroke="#e00" />
        <path d="M1330 834v110q8 48 66 62h127" stroke="#a09898" strokeWidth="3" />
      </g>
    </svg>
  );
}

function Page() {
  return (
    <article className="relative mx-auto h-full w-[951px] shrink-0 overflow-hidden bg-white pr-[61px] pl-[58px] shadow-[4px_0_5px_#2d4a78]">
      <div className="flex h-[203px] overflow-hidden">
        <div className="relative h-[200px] w-[380px] overflow-hidden border-r border-[#888] pl-[35px]">
          <table className="-mt-[4px] w-[268px] table-fixed border-collapse text-center font-['Noto_Sans',sans-serif] text-[9px] leading-[10px] text-[#222]">
            <colgroup><col className="w-[49px]" /><col className="w-[70px]" /><col className="w-[50px]" /><col className="w-[49px]" /><col className="w-[50px]" /></colgroup>
            <tbody>
              {ROWS.map((r, i) => (
                <tr key={i} className="h-[11px]">
                  {r.map((c, j) => <td key={j} className={`h-[11px] border border-[#222] p-0 whitespace-nowrap ${j === 2 ? "pr-1" : ""}`}>{c}</td>)}
                </tr>
              ))}
            </tbody>
          </table>
          <div className="absolute top-[172px] left-[162px] h-[16px] w-[47px] border-2 border-[#c83838]" />
        </div>
        <div className="flex flex-col items-start">
          <span className="mt-[8px] ml-[6px] text-[9px] leading-[12px] text-[#555]">¤</span>
          <span className="mt-[95px] h-px w-[16px] bg-[#999]" />
          <span className="mt-[66px] ml-[15px]"><Ret /></span>
        </div>
      </div>
      <div className="font-['Liberation_Serif','Noto_Sans_CJK_SC',serif] text-[19px] leading-[25px] text-[#111]">
        <Line>6. <B>同时<G>有基铜和完成铜厚且</G>完成<G>铜厚不</G>符合 IPC 标准时，<G>按基铜制作</G>，完成<G>铜厚满足 </G>IPC 标准即可。</B></Line>
        <Line w="w-[661px]" mark="ret">7. 钻孔/槽孔到 V-CUT 间距不足时，按文件制作，客户接受破孔破环<G>和露铜毛刺</G></Line>
        <Line>8. 线<span className="bg-[#a9cdf1] pb-[3px] text-[#1b3a5e]">路层导体距离外形线较近，按文件制作会导致<G>板边露铜有</G>毛刺时，直接按文件制作，客户接受<G>板</G></span></Line>
        <div className="w-[69px] bg-[#a9cdf1] text-[#1b3a5e]"><Line w="w-[58px]" mark="down"><G>边露铜</G></Line></div>
        <Line>9. 若设计 BGA 夹线间距不足，允许我司将夹线的线宽缩小至我司能力最小线宽制作，且允许我司<R>削</R></Line>
        <Line w="w-[206px]" mark="down">BGA 满足最小间距能力；</Line>
        <Line mark="down">10. 若部分字符上焊盘，优先移动制作，无法移动的允许<R>削</R>字符制作，但是削后的字符需保证可辨认。</Line>
        <Line>11. <B>提供 ODB++文件会自<G>带网表文件</G>，检出异常时要 EQ；提供 <R>gerber </R>文件时如<G>无网表文件</G>，不需要</B></Line>
        <Line w="w-[222px]" mark="ret"><B>EQ，按 <R>gerber </R>文件制作。</B></Line>
        <Line w="w-[790px]" mark="ret">12. 如下附图所示同时有设计圆角和直角（实际直角是客户<G>标注线</G>交叉形成的）均按圆角制作。</Line>
        <div className="mt-[10px] flex items-end"><CadPicture /><Ret /></div>
        <div className="mt-[10px]"><Line><B>13. 文件中有要求拼板交货，V-CUT 线没有，通工艺边制作时，所有 V-CUT 线可以默认做成贯穿工艺</B></Line></div>
      </div>
    </article>
  );
}

function Workspace() {
  return (
    <main className="relative flex min-h-0 flex-1 overflow-hidden">
      <div className="flex w-[22px] shrink-0 bg-[#9dbce4] pl-[6px]">
        <div className="flex h-full w-[12px] flex-col overflow-hidden bg-white pb-[4px] font-['Liberation_Sans',sans-serif] text-[10px] text-[#333]">
          {Array.from({ length: 34 }, (_, i) => (
            <div key={i} className={`flex min-h-0 flex-col items-center ${i ? "flex-1 justify-end" : "h-[10px] justify-end"}`}>
              {i > 0 && <i className="mb-[4px] h-px w-[5px] bg-[#666]" />}
              <span className="flex h-[13px] w-[12px] items-center justify-center [writing-mode:sideways-lr]">{i + 3}</span>
            </div>
          ))}
        </div>
      </div>
      <div className="relative min-w-0 flex-1 overflow-hidden bg-linear-to-b from-[#a2c0e8] via-[#5379ae] via-72% to-[#6590cf]">
        <svg className="absolute top-0 left-0" width="340" height="420" viewBox="0 0 340 420">
          <defs><linearGradient id="sw" x1="0" y1="0" x2="0" y2="1"><stop offset="0" stopColor="#c4dcf8" stopOpacity=".5" /><stop offset="1" stopColor="#c4dcf8" stopOpacity=".12" /></linearGradient></defs>
          <path d="M0 0h318Q110 30 0 118z" fill="url(#sw)" />
          <path d="M0 0h180Q120 60 0 95z" fill="url(#sw)" opacity=".5" />
        </svg>
        <Page />
        <svg className="absolute top-[92px] left-1/2 ml-[294px]" width="170" height="156" viewBox="0 0 170 156" aria-hidden="true">
          <path d="M160 5L30 132" stroke="#0f0" strokeWidth="5" strokeLinecap="round" />
          <path d="M7 152L18 131l10-9 14 11-8 7-24 13z" fill="#0f0" stroke="#0f0" strokeWidth="4" strokeLinejoin="round" />
        </svg>
      </div>
      <div className="flex w-[17px] shrink-0 flex-col items-center border-l border-[#b9d2f3] bg-[#a9c6f0]">
        <div className="flex w-[15px] flex-1 flex-col items-center bg-linear-to-r from-[#6f8fbe] to-[#819fcb]">
          <button aria-label="向上滚动" className="flex h-[17px] items-center"><svg width="9" height="5"><path d="M0 5h9L4.500 0z" fill="#3d5f96" /></svg></button>
          <div className="flex-[413] " />
          <div className="flex w-[15px] flex-[227] flex-col items-center justify-center gap-px rounded-[2px] border border-[#5a6f94] bg-linear-to-r from-[#e9eff6] via-[#dfe7f0] to-[#b4c4da]">
            {[0, 1, 2, 3].map((i) => <i key={i} className="h-px w-2 bg-[#6b7a92]" />)}
          </div>
          <div className="flex-[108]" />
          <button aria-label="向下滚动" className="flex h-[17px] items-center"><svg width="9" height="5"><path d="M0 0h9L4.500 5z" fill="#3d5f96" /></svg></button>
        </div>
        <div className="flex h-[52px] flex-col items-center justify-around">
          <button aria-label="前一页"><svg width="7" height="8"><path d="M3.500 0L7 4H0zM0 6h7v1H0z" /></svg></button>
          <button aria-label="选择浏览对象" className="h-[7px] w-[8px] rounded-full border border-[#222] bg-[#ddd]" />
          <button aria-label="下一页"><svg width="7" height="8"><path d="M3.500 8L7 4H0zM0 1h7v1H0z" /></svg></button>
        </div>
      </div>
    </main>
  );
}

function StatusBar() {
  const sep = "h-full border-r border-[#9db9e0] flex items-center";
  return (
    <footer className="flex h-[22px] shrink-0 items-center border-t border-[#7b98c4] bg-linear-to-b from-[#dcebfd] via-[#c3dafa] to-[#bdd5f5] text-xs text-[#1b2f55]">
      <span className={`${sep} w-[67px] pl-2`}>页面: 2/2</span>
      <span className={`${sep} w-[89px] pl-[9px] whitespace-nowrap`}>字数: 45/958</span>
      <span className={`${sep} w-[142px] pl-2 whitespace-nowrap`}>
        <svg width="18" height="16" viewBox="0 0 18 16" className="mr-4"><path d="M1 8l8-4 7 5-7 5z" fill="#fff" stroke="#4a66a0" /><path d="M1 8v2l8 5 7-5V9l-7 5z" fill="#7b9ad6" stroke="#4a66a0" /><path d="M7 1l7 9M15 1L7 9" stroke="#e03a1a" strokeWidth="2.200" /></svg>
        中文(简体，中国)
      </span>
      <span className={`${sep} w-[42px] pl-[9px]`}>插入</span>
      <span className="flex-1" />
      <div className="flex h-full w-[286px] items-center border-l border-white bg-linear-to-b from-[#b3cdf2] via-[#8fb2e4] to-[#a5c4f0] pl-[5px]">
        <div className="flex h-[19px] rounded-[2px] border border-[#8aa9d8] bg-[#b9d1f2]">
          {[0, 1, 2, 3, 4].map((i) => (
            <button key={i} aria-label={["页面视图", "阅读版式", "Web 版式", "大纲视图", "普通视图"][i]} className={`flex w-[18px] items-center justify-center border-r border-[#a7c0e4] ${i === 0 ? "bg-linear-to-b from-[#fbc67b] to-[#ffe084]" : ""}`}>
              <svg width="12" height="12" viewBox="0 0 12 12" fill={i < 3 ? "#fff" : "none"} stroke="#555">
                {i === 0 && <path d="M1.500.5h9v11h-9zM3 3.500h6M3 5.500h6M3 7.500h6M3 9.500h6" />}
                {i === 1 && <path d="M.5 1.500L6 3l5.500-1.500v8L6 11.500l-5.500-2zM6 3v8M2 5h2M2 7h2M8 5h2M8 7h2" />}
                {i === 2 && <><path d="M.5.500h9v9h-9zM2 3.500h6M2 5.500h4" /><circle cx="8.500" cy="8.500" r="3" fill="#2f8a80" /></>}
                {i === 3 && <path d="M1 1.500h8M4 4.500h8M4 7.500h6M2 10.500h10" stroke="#777" />}
                {i === 4 && <path d="M0 1.500h12M0 4.500h12M0 7.500h12M0 10.500h12" />}
              </svg>
            </button>
          ))}
        </div>
        <button className="ml-2 w-[33px] text-left">120%</button>
        <button aria-label="缩小" className="ml-[8px] flex size-[15px] items-center justify-center rounded-full border border-[#6f7f99] bg-[#e4ecf8]"><i className="h-[2px] w-[7px] bg-[#555]" /></button>
        <div className="relative flex h-full flex-1 items-center">
          <input type="range" aria-label="显示比例" defaultValue="50" className="absolute inset-0 w-full opacity-0" />
          <i className="h-px w-full bg-[#5a7ab0]" />
          <svg className="absolute left-1/2 -ml-[4px]" width="10" height="14" viewBox="0 0 10 14" fill="#d8e5f8" stroke="#5a6f94"><path d="M.5.500h9v8L5 13 .5 8.500zM5 3v5" /></svg>
        </div>
        <button aria-label="放大" className="mr-[5px] flex size-[15px] items-center justify-center rounded-full border border-[#6f7f99] bg-[#e4ecf8]"><svg width="9" height="9"><path d="M4.500 0v9M0 4.500h9" stroke="#555" strokeWidth="2" /></svg></button>
      </div>
    </footer>
  );
}

const EYE = <><path d="M2 5l8-4 6 3-2 5-5 1z" fill="#2fb0a8" stroke="#0b4a50" /><path d="M5 15q4-8 14-8 10 1 11 9-1 9-10 11-11 0-15-6z" fill="#1f9a94" stroke="#0b4a50" strokeWidth="1.500" strokeDasharray="3 1" /><path d="M8 18q10 8 20 0M9 14q9-7 18 0" stroke="#7fe0c0" fill="none" /></>;

const APPS = [
  ["海螺", <><path d="M11 30v-4Q1 19 2 12q1-4 4-5 1-4 5-4 5-3 10 0 4 0 5 4 3 1 4 5 1 7-9 14v4z" fill="#f3d79a" stroke="#c89a4c" /><path d="M16 28L5 10M16 28L9 5M16 28V2M16 28l7-23M16 28l11-18" stroke="#d9a95c" /><path d="M20 12l2 6 7 1-5 4 2 7-6-4-6 4 2-7-5-4 7-1z" fill="#f08a2a" stroke="#a8520e" /></>],
  ["记事本", <><rect x="4" y="2" width="24" height="28" rx="3" fill="#e8f4f8" stroke="#9ab" /><path d="M7 6h18M7 11h18M7 16h18M7 21h18M7 26h18" stroke="#2f8fc0" strokeWidth="2.500" /></>],
  ["Genesis", <path d="M30 2h-7l-3 3h-6Q3 8 3 19t9 11q14 1 16-14H16v5h6q-3 5-9 4-5-2-4-8 2-7 8-7h8l4-3z" fill="#d8251c" stroke="#8e120c" />],
  ["虚拟软驱", <><path d="M3 1h27v30H5l-2-2z" fill="#2b2fb0" stroke="#888" /><path d="M8 1h16v11H8z" fill="#cdd2dc" /><path d="M17 2h5v9h-5z" fill="#2b2fb0" /><path d="M5 15h23v16H5z" fill="#fff" /><path d="M6 19h21M6 23h12M6 27h10" stroke="#d04040" /><text x="17" y="30" fontSize="9" fontFamily="Liberation Sans">64</text></>],
  ["P", <><path d="M12 8q2-6 11-5 8 2 8 9 0 8-8 9l-2 3v6H10l2-12z" fill="#0f8a40" stroke="#0a5a2b" /><path d="M4 5q10-5 19-2-10 1-11 8z" fill="#0c6f36" /></>],
  ["Word", <><path d="M3 3q8-2 12-1l1 27-8-1q-5-2-5-8z" fill="#dfe9f8" stroke="#7a94c4" /><path d="M8 5l22 2-1 22-23-3z" fill="#f6f9fe" stroke="#5a78b4" /><path d="M8 9l3 10 3-9 2 10 4-10" fill="none" stroke="#2b52a0" strokeWidth="2.500" /><path d="M22 10h6M22 13h6M22 16h6M11 23l16 2" stroke="#5a78b4" strokeWidth="1.500" /></>, 2],
  ["Excel", <><path d="M3 3q8-2 12-1l1 27-8-1q-5-2-5-8z" fill="#dff0d8" stroke="#6fa050" /><path d="M8 5l23 2-1 24-23-3z" fill="#f6fef2" stroke="#4b8a3a" /><path d="M9 8l9 12M18 8L9 20" stroke="#2c7a2c" strokeWidth="3.500" /><path d="M20 12h10M20 17h10M9 23h20M24 8v21M18 22v7" stroke="#7ab060" strokeWidth="1.500" /></>, 1],
  ["Acrobat", <><rect x="3" y="2" width="27" height="28" rx="1" fill="#f4f4f4" stroke="#aaa" /><path d="M8 25q8-6 8-17 0-4 1-1 2 10 10 11 2 2-3 1-8-1-16 6z" fill="none" stroke="#d02a1e" strokeWidth="1.500" /></>],
  ["Eye", <>{EYE}<circle cx="18" cy="16" r="5" fill="#0c5a58" stroke="#e8d860" strokeWidth="2" /><circle cx="18" cy="15" r="2" fill="#fff" /><path d="M22 29l8-4" stroke="#d08aa8" strokeWidth="2" /></>],
  ["X", <><path d="M3 3h8l18 27h-8z" fill="#8a2a9a" stroke="#fff" /><path d="M28 2L4 30" stroke="#fff" strokeWidth="3" /><path d="M28 2L4 30" stroke="#111" strokeWidth="1.500" /></>, 1],
  ["Eye 2", <>{EYE}<circle cx="18" cy="16" r="4" fill="#d8e8a0" stroke="#0c5a58" strokeWidth="3" /><path d="M22 29l8-4" stroke="#d08aa8" strokeWidth="2" /></>],
  ["钉钉", <><rect x="2" y="1" width="28" height="29" rx="6" fill="#1e8ff0" /><path d="M11 6q1 4 9 7 4 3 1 10-3 4-7 5l2-5q-3-2-3-5-3-6-2-12z" fill="#fff" /></>],
];

function Taskbar() {
  return (
    <footer className="flex h-[40px] shrink-0 items-center border-t border-[#3a5272] bg-linear-to-r from-[#0d2850] via-[#06275a] to-[#0c2346] text-white">
      <button aria-label="开始" className="ml-[8px]">
        <svg width="38" height="38" viewBox="0 0 38 38">
          <defs><radialGradient id="st" cx=".5" cy=".75" r=".7"><stop offset="0" stopColor="#5fd0f8" /><stop offset=".6" stopColor="#1f6aa8" /><stop offset="1" stopColor="#0d3560" /></radialGradient></defs>
          <circle cx="19" cy="19" r="18" fill="url(#st)" stroke="#7fa8cc" />
          <path d="M10 11q4-3 9 0l-2 8q-4-3-9 0z" fill="#e8602c" /><path d="M20 11q5 3 9 0l-2 8q-5 3-9 0z" fill="#8cc63e" />
          <path d="M8 20q4-3 9 0l-2 8q-4-3-9 0z" fill="#3f9ae0" /><path d="M18 20q5 3 9 0l-2 8q-5 3-9 0z" fill="#fbc82e" />
        </svg>
      </button>
      <div className="ml-[14px] flex gap-1">
        {APPS.map(([n, art, k]) => (
          <div key={n} className="flex w-[58px]">
            <button aria-label={n} className={`flex h-[38px] flex-1 items-center justify-center rounded-[3px] border border-[#8093ae] ${k === 2 ? "bg-linear-to-b from-[#c3cddb] to-[#6f86a6]" : "bg-linear-to-br from-[#6e7f99] via-[#2b4468] via-50% to-[#1c3a66]"}`}>
              <svg width="32" height="32" viewBox="0 0 32 32">{art}</svg>
            </button>
            {k && <i className="h-[38px] w-[4px] rounded-r-[3px] border border-l-0 border-[#8093ae] bg-[#3a5274]" />}
          </div>
        ))}
      </div>
      <div className="flex-1" />
      <div className="flex items-center gap-1">
        <svg width="16" height="16" viewBox="0 0 16 16"><path d="M0 0h16v16H0z" fill="#eee" /><path d="M1 8h7v7H1z" fill="#fff200" /><path d="M8 8h7v7H8z" fill="#d01818" /><g fontSize="8" fontWeight="bold" fontFamily="Liberation Sans"><text x="1" y="7">MS</text><text x="1" y="15" fill="#c00">P</text><text x="9" y="15" fill="#fff200">Y</text></g></svg>
        <span className="w-[16px] border border-dashed border-[#dde] text-center text-[13px] leading-[14px]">体</span>
        <span className="w-[16px] text-base leading-4">中</span>
        <span className="w-[14px] text-sm leading-4">•,</span>
        <svg width="17" height="17" viewBox="0 0 17 17"><path d="M2 8l11-2 1 7-4 3-7-2z" fill="#e8d84a" stroke="#776a10" /><path d="M3 2l5 5M13 1L7 7" stroke="#e05050" strokeWidth="2.500" /><circle cx="13" cy="4" r="3" fill="none" stroke="#ddd" /></svg>
        <svg width="17" height="16" viewBox="0 0 17 16"><path d="M0 1h12v13H0z" fill="#fff" /><path d="M0 1h12v3H0z" fill="#2a3fb0" /><path d="M1 6h9M1 8.500h9M1 11h9" stroke="#333" /><path d="M9 6v9l2-2 2 3 2-1-2-3h3z" fill="#fff" stroke="#000" strokeWidth=".8" /></svg>
        <span className="ml-[4px] flex size-[15px] items-center justify-center rounded-full border border-[#ccd] bg-[#2238b8] text-[11px] font-bold">?</span>
        <span className="ml-[4px] flex flex-col items-center gap-2"><svg width="9" height="7" viewBox="0 0 9 7" fill="none" stroke="#fff"><path d="M3 2V.500h5.500v4H7M.5 2.500h6v4h-6z" /></svg><Caret c="#fff" /></span>
        <svg width="8" height="5" className="ml-[6px]"><path d="M0 5h8L4 0z" fill="#fff" /></svg>
        <svg width="16" height="16" viewBox="0 0 16 16" className="ml-[8px]"><path d="M1 1v15" stroke="#fff" strokeWidth="1.500" /><path d="M2 2q4-1 6 1t6 0v7q-4 1-6-1t-6 0z" fill="#e8e8e8" /><circle cx="11" cy="11" r="4.500" fill="#d82a20" /><path d="M9 9l4 4M13 9l-4 4" stroke="#fff" strokeWidth="1.400" /></svg>
        <svg width="16" height="16" viewBox="0 0 16 16" className="ml-[4px]" fill="none" stroke="#fff" strokeWidth="1.500"><path d="M5 4h10v8H5zM7 14.500h7M2 1v3M4 1v2M1 4h3v8h2" /></svg>
      </div>
      <div className="ml-[10px] w-[72px] text-center text-xs leading-[18px]"><div>21:33</div><div>2024/5/18</div></div>
      <button aria-label="显示桌面" className="mx-[2px] h-[38px] w-[13px] border border-[#5f7590] bg-linear-to-b from-[#4a5f7e] to-[#1b2f4e]" />
    </footer>
  );
}

export default function App() {
  return (
    <div className={`${UI} relative flex h-screen min-w-[1200px] flex-col overflow-hidden bg-[#bfdbff]`}>
      <TitleBar />
      <Orb />
      <Ribbon />
      <HRuler />
      <Workspace />
      <StatusBar />
      <Taskbar />
    </div>
  );
}
